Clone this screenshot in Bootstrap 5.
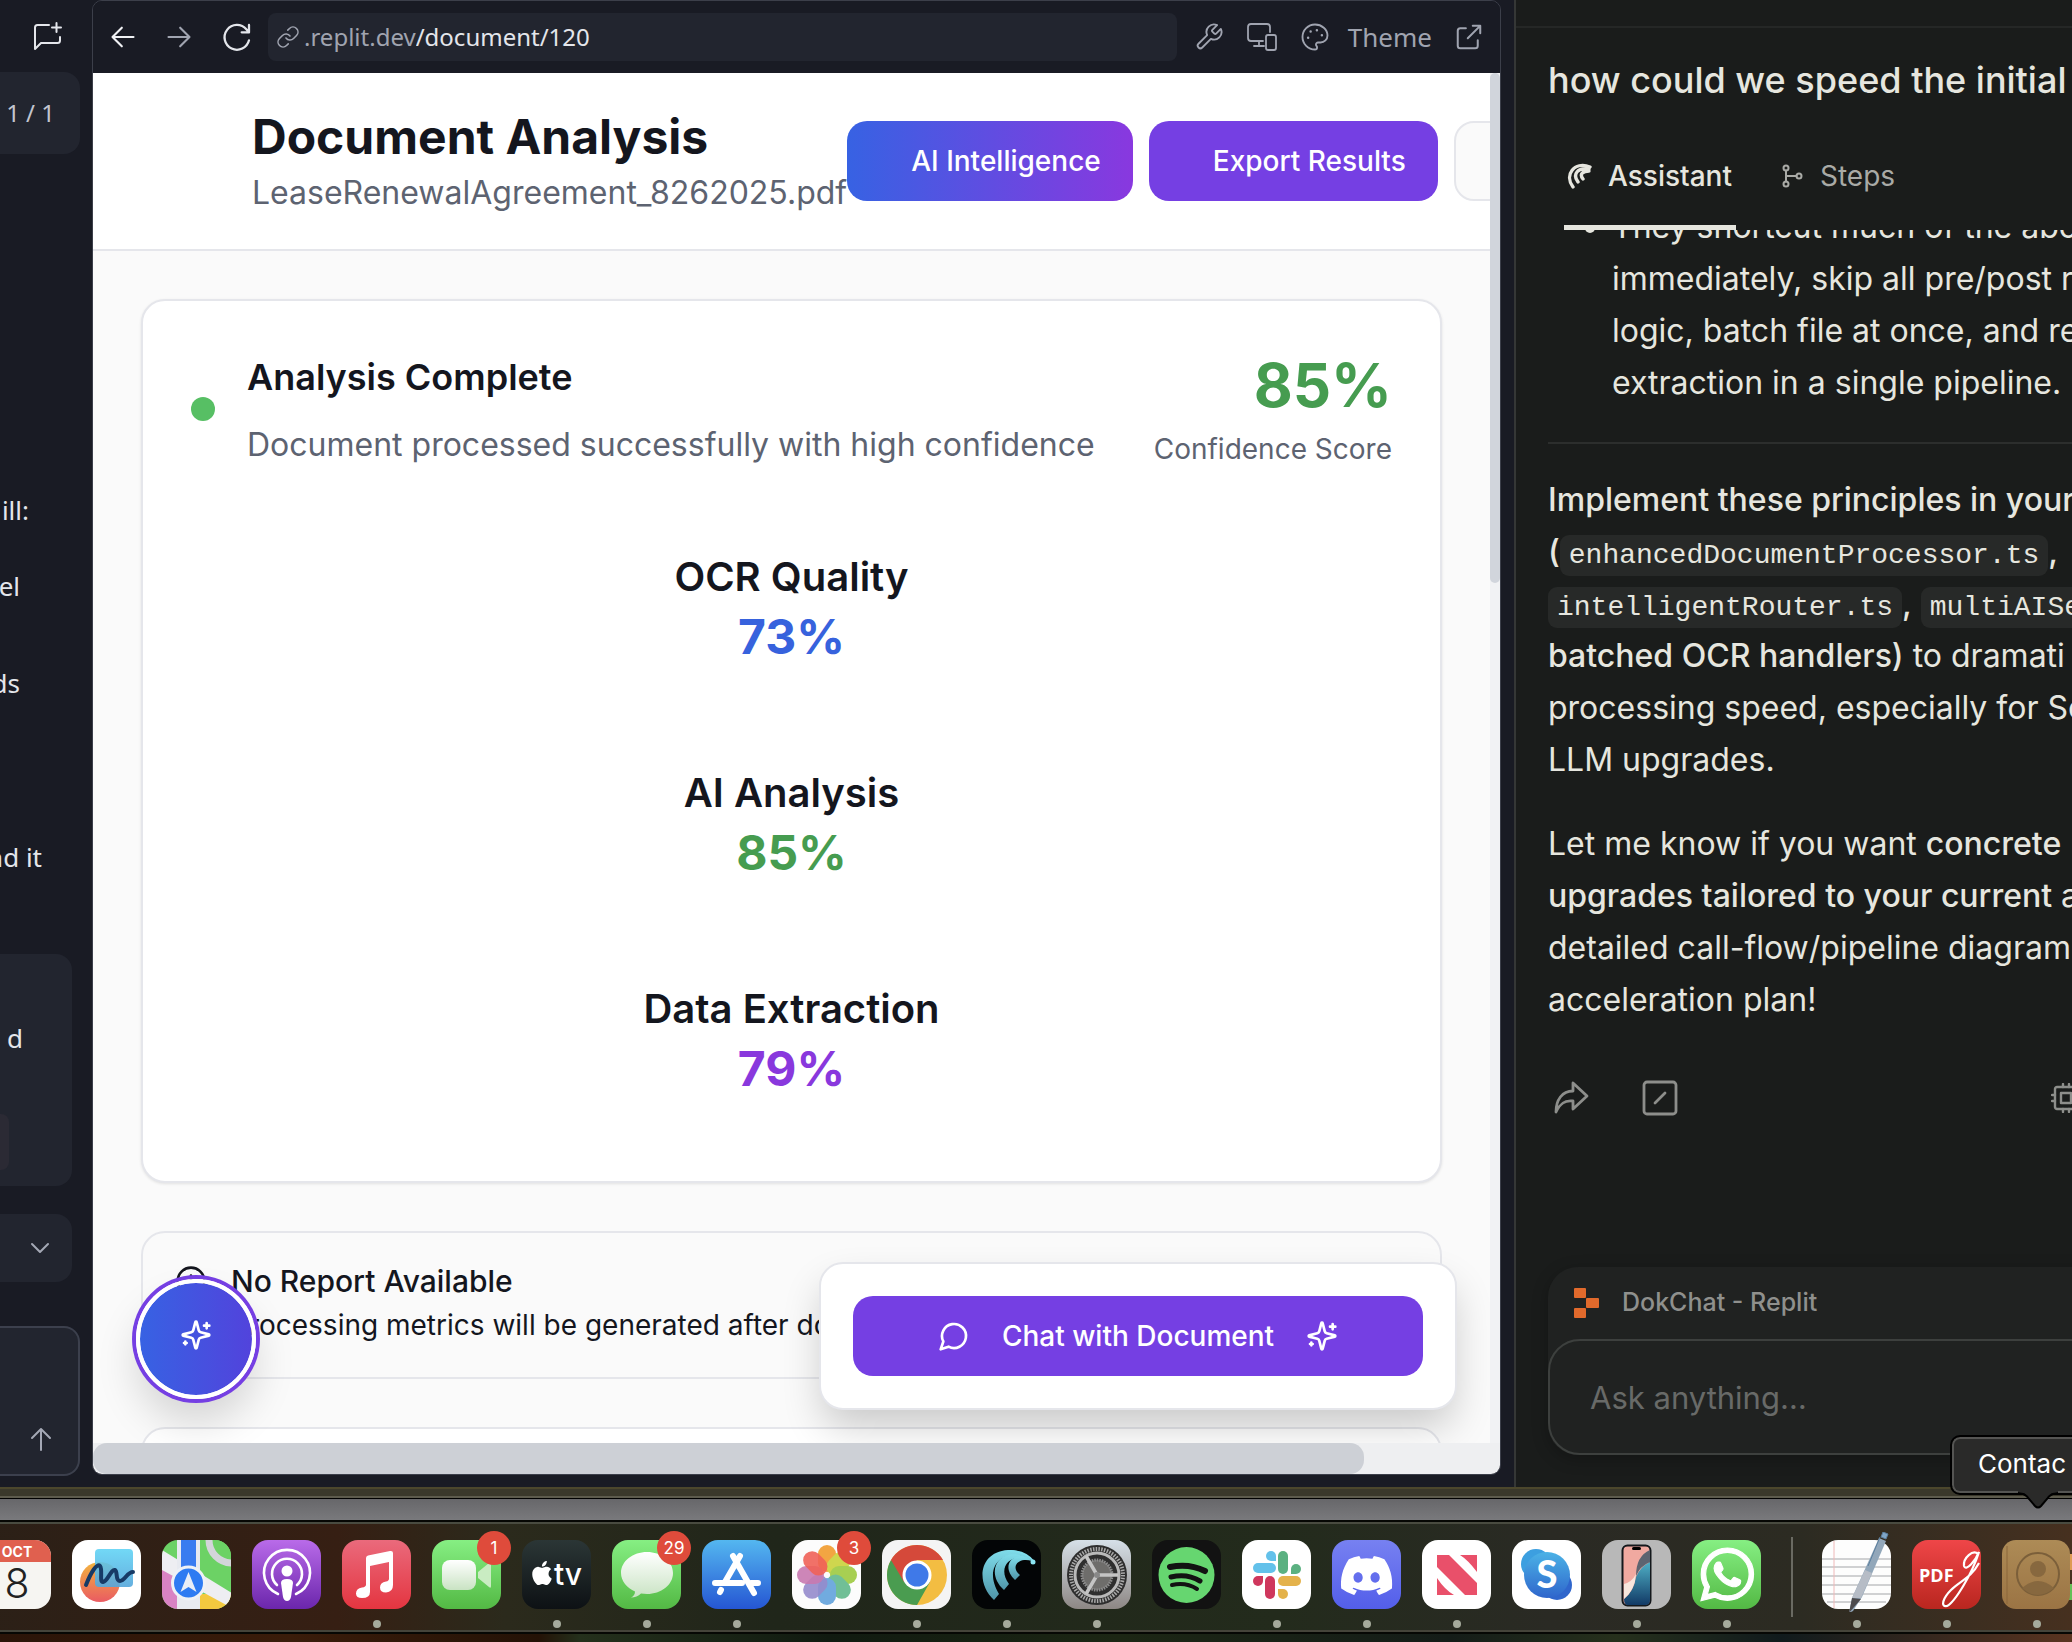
<!DOCTYPE html>
<html lang="en">
<head>
<meta charset="utf-8">
<meta name="viewport" content="width=device-width, initial-scale=1">
<title>Document Analysis</title>
<link href="https://cdn.jsdelivr.net/npm/bootstrap@5.3.0/dist/css/bootstrap.min.css" rel="stylesheet">
<script src="https://cdn.jsdelivr.net/npm/bootstrap@5.3.0/dist/js/bootstrap.bundle.min.js"></script>
<style>
body{height:100vh;overflow:hidden;background:#191b24;font-family:Inter,"Liberation Sans",sans-serif;white-space:nowrap}
svg{display:block;flex:none}
.ln{fill:none;stroke:currentColor;stroke-linecap:round;stroke-linejoin:round}
button{border:0;background:none;padding:0;color:inherit}
.ide{font-family:"Noto Sans",sans-serif;color:#e4e6eb;background:#191b24}
/* agent sidebar */
.agent{width:92px;flex:none;font-size:26px;line-height:36px}
.agent-head{height:72px;padding-right:29px}
.panelbox{background:#22252f;border-radius:0 16px 16px 0}
.counter{height:82px;margin-right:12px;padding-right:25px;font-size:24px;color:#c2c5cf}
.endline{display:flex;justify-content:flex-end}
.taskbox{height:232px;margin-right:20px}
.taskchip{width:9px;height:56px;background:#2b2a34;border-radius:0 8px 8px 0}
.foldbox{height:68px;margin-right:20px;padding-right:20px;color:#a4a8b5}
.prompt{height:150px;margin-right:12px;padding:0 24px 22px 0;border:2px solid #3c404d;border-left:0;color:#a4a8b5}
/* web view */
.webview{min-width:0;margin:0 13px 12px 0;border:1px solid #3c3f4a;border-radius:10px;overflow:hidden}
.toolbar{height:72px;flex:none;padding:0 16px 0 16px;color:#a0a4b0}
.address{height:48px;min-width:0;background:#22252f;border-radius:8px;padding:0 8px;font-size:24px;margin-left:15px;margin-right:17px}
.address input{background:none;border:0;outline:0;color:#e4e6eb;padding:0;min-width:0;flex:1}
.themebtn{font-size:26px}
.site{background:#fafafa;min-height:0;color:#14161e}
.site-head{height:178px;flex:none;background:#fff;border-bottom:2px solid #e5e6eb;padding-left:159px}
.site-head h1{font-size:48px;line-height:64px;font-weight:700;margin:0}
.sub{font-size:32px;line-height:48px;color:#5d6371}
.act{height:80px;border-radius:20px;color:#fff;font-size:28px;font-weight:500;padding:0 32px 0 64px}
.grad{background:linear-gradient(90deg,#3762e3,#8938df)}
.violet{background:#753fe3}
.more{width:190px;background:#fafafa;border:2px solid #e5e6eb}
.site-body{padding:48px 48px 0}
.panel{background:#fff;border:2px solid #e5e6eb;border-radius:24px}
.summary{padding:48px;box-shadow:0 1px 3px #0000001a}
.dot{width:24px;height:24px;border-radius:50%;background:#57bf64;flex:none}
.summary h2{font-size:36px;line-height:56px;font-weight:600;margin:0 0 16px}
.score{font-size:60px;line-height:72px;font-weight:700;color:#469c50}
.cap{font-size:28px;line-height:40px;color:#5d6371}
.metric{padding:32px 0;text-align:center}
.metric h3{font-size:40px;line-height:56px;font-weight:600;margin:0}
.metric div{font-size:48px;line-height:64px;font-weight:700}
.notice{background:#fafafa;padding:32px;margin-top:48px;height:148px;overflow:hidden}
.notice h4{font-size:30px;line-height:32px;font-weight:500;margin:0 0 8px}
.notice p{font-size:28px;line-height:40px;margin:0}
.vbar{width:10px;background:#f1f2f4}
.vbar div{height:510px;background:#d1d5dc;border-radius:5px}
.hbar{height:31px;flex:none;background:#eeeff1;padding-right:10px}
.hbar div{width:91%;height:31px;background:#cdd0d6;border-radius:14px}
.fab{position:absolute;left:43px;bottom:44px;width:120px;height:120px;border-radius:50%;border:4px solid #fff;background:linear-gradient(90deg,#3762e3,#5243dc);background-clip:padding-box;box-shadow:0 0 0 4px #753fe3,0 24px 40px #00000026;color:#fff}
.chatpop{position:absolute;right:33px;bottom:33px;width:638px;padding:32px;box-shadow:0 20px 40px -4px #00000033}
.chatpop button{font-size:28px;padding:0}
/* assistant panel */
.assist{width:558px;flex:none;background:#1a1c1b;border-left:2px solid #353736;color:#e6e6df;overflow:hidden}
.assist-top{height:28px;border-bottom:2px solid #252726;flex:none}
.ask-title{font-size:36px;line-height:48px;font-weight:500;margin:0;padding:28px 0 0 32px}
.tabrow{padding-left:48px;margin-top:18px;gap:44px}
.tabrow a{height:108px;font-size:28px;color:#a9aaa6;text-decoration:none;padding:0 4px 0 2px}
.tabrow a.active{font-weight:500;color:#e6e6df;box-shadow:inset 0 -5px #e6e6df}
.thread{min-height:0;overflow:hidden;padding-left:32px;font-size:32px;line-height:52px}
.thread ul{margin:-29px 0 0;padding-left:64px}
.thread p{margin:0 0 32px}
.thread b{font-weight:500}
.thread hr{margin:33px 0 30px;border:0;height:2px;background:#2c2e2d;opacity:1}
.thread code{font-family:"Liberation Mono",monospace;font-size:28px;line-height:28px;color:#e6e6df;background:#272928;border-radius:9px;padding:5px 9px}
.acts{gap:53px;margin-top:54px;padding-left:5px;color:#8d8e8b}
.composer{margin:0 0 32px 32px;width:640px;background:#202221;border-radius:30px;color:#8f908d;box-shadow:0 4px 16px #00000040}
.source{height:72px;padding-left:26px;font-size:25px;font-weight:500;gap:23px}
.composer input{height:116px;width:640px;background:#202221;border:2px solid #3d403e;border-radius:32px;padding:0 40px;font-size:31px;color:#e6e6df}
.composer input::placeholder{color:#686a68;opacity:1}
/* desktop */
.rim{height:11px;background:#3a382b;border-top:2px solid #4c472c;border-bottom:2px solid #5d5b4d}
.shelf{height:24px;background:linear-gradient(#67676a,#7b7b7e);border-top:1px solid #000}
.dock{position:relative;height:110px;border-top:2px solid #494b40;border-bottom:2px solid #45443a;outline:2px solid #060704;padding:16px 0 0;margin-left:-18px;gap:20px;background:linear-gradient(90deg,#2b2017,#361f13 17%,#2b2a1c 25%,#20261a 38%,#232b1c 62%,#2a2a24 75%,#2c2b22 87%,#46301f)}
.app{position:relative;width:70px;height:90px;flex:none}
.app.open::after{content:"";position:absolute;left:31px;top:80px;width:8px;height:8px;border-radius:50%;background:#a5aa9c}
.app .count{position:absolute;right:-9px;top:-9px;width:34px;height:34px;border-radius:50%;background:#df4b3b;color:#fff;font-size:17px;line-height:34px;text-align:center}
.rule{width:2px;height:80px;margin:-3px 9px 0;background:#6a6a62;flex:none}
.paper{height:10px;background:linear-gradient(90deg,#2a1408,#3a1c0a 14%,#241206 26%,#24301c 28%,#101a10 40%,#1c2614 54%,#141c18 70%,#26301c 78%,#101a1c 86%,#5a3420)}
.tip{position:absolute;right:0;bottom:149px;width:120px;height:56px;z-index:5;background:#2a2a29;border:2px solid #555553;border-right:0;outline:2px solid #000;border-radius:8px 0 0 8px;padding-left:24px;font-size:26px;line-height:50px;color:#fff}
.tip svg{position:absolute;left:64px;top:50px}
</style>
</head>
<body class="d-flex flex-column position-relative">
<svg width="0" height="0" class="position-absolute" aria-hidden="true">
 <defs>
  <symbol id="spark" viewBox="0 0 24 24"><path d="M9.937 15.5A2 2 0 0 0 8.5 14.063l-6.135-1.582a.5.5 0 0 1 0-.962L8.5 9.936A2 2 0 0 0 9.937 8.5l1.582-6.135a.5.5 0 0 1 .963 0L14.063 8.5A2 2 0 0 0 15.5 9.937l6.135 1.581a.5.5 0 0 1 0 .964L15.5 14.063a2 2 0 0 0-1.437 1.437l-1.582 6.135a.5.5 0 0 1-.963 0zM20 3v4M22 5h-4M4 17v2M5 18H3"/></symbol>
  <linearGradient id="gGreen" x2="0" y2="1"><stop stop-color="#86ef83"/><stop offset="1" stop-color="#53b944"/></linearGradient>
  <linearGradient id="gWhite" x2="0" y2="1"><stop stop-color="#fff"/><stop offset="1" stop-color="#c9e3c3"/></linearGradient>
  <linearGradient id="gPod" x2="0" y2="1"><stop stop-color="#b96be9"/><stop offset="1" stop-color="#6b26ac"/></linearGradient>
  <linearGradient id="gMusic" x2="0" y2="1"><stop stop-color="#ea6a7c"/><stop offset="1" stop-color="#e43540"/></linearGradient>
  <linearGradient id="gStore" x2="0" y2="1"><stop stop-color="#54b7f0"/><stop offset="1" stop-color="#2556d3"/></linearGradient>
  <linearGradient id="gTv" x2="0" y2="1"><stop stop-color="#2b3636"/><stop offset="1" stop-color="#0d1114"/></linearGradient>
  <linearGradient id="gDisc" x2="0" y2="1"><stop stop-color="#7781f1"/><stop offset="1" stop-color="#535eea"/></linearGradient>
  <linearGradient id="gSet" x2="0" y2="1"><stop stop-color="#d6e0e8"/><stop offset="1" stop-color="#8d8784"/></linearGradient>
  <linearGradient id="gPdf" x2="0" y2="1"><stop stop-color="#ef4648"/><stop offset="1" stop-color="#b9261f"/></linearGradient>
  <linearGradient id="gBook" x2="0" y2="1"><stop stop-color="#ad8b56"/><stop offset="1" stop-color="#9b7444"/></linearGradient>
  <linearGradient id="gSky" x2="0" y2="1"><stop stop-color="#4bb2e6"/><stop offset="1" stop-color="#2f66cc"/></linearGradient>
  <linearGradient id="gFree" x2="0" y2="1"><stop stop-color="#f3b43f"/><stop offset="1" stop-color="#ea5b62"/></linearGradient>
  <linearGradient id="gSq" x2="0" y2="1"><stop stop-color="#62d4f5"/><stop offset="1" stop-color="#54a6db"/></linearGradient>
  <linearGradient id="gWave" x2="0" y2="1"><stop stop-color="#7fdcea"/><stop offset="1" stop-color="#4f95a8"/></linearGradient>
  <linearGradient id="gPh" x2="0" y2="1"><stop stop-color="#4fb0c6"/><stop offset="1" stop-color="#123a66"/></linearGradient>
  <clipPath id="sq"><rect width="69" height="69" rx="16"/></clipPath>
 </defs>
</svg>

<main class="d-flex flex-grow-1" style="min-height:0">
 <aside class="ide agent d-flex flex-column overflow-hidden">
  <div class="agent-head d-flex align-items-center justify-content-end">
   <button aria-label="New chat"><svg class="ln" width="30" height="30" viewBox="0 0 30 30" stroke-width="2"><path d="M16 4H4.500Q2 4 2 6.500V28l6-6h16.500Q27 22 27 19.500V16M23.500 2v9M19 6.500h9"/></svg></button>
  </div>
  <div class="panelbox counter d-flex align-items-center justify-content-end">1 / 1</div>
  <div class="endline" style="margin:338px 63px 0 0">ill:</div>
  <div class="endline" style="margin:40px 72px 0 0">el</div>
  <div class="endline" style="margin:61px 72px 0 0">ds</div>
  <div class="endline" style="margin:138px 50px 0 0">nd it</div>
  <div class="panelbox taskbox d-flex flex-column justify-content-end" style="margin-top:79px">
   <div class="endline mb-auto" style="margin:66px 49px 0 0">d</div>
   <div class="taskchip mb-3"></div>
  </div>
  <button class="panelbox foldbox d-flex align-items-center justify-content-end" style="margin-top:28px" aria-label="Expand"><svg class="ln" width="24" height="24" viewBox="0 0 24 24" stroke-width="2"><path d="M4 8l8 8 8-8"/></svg></button>
  <div class="panelbox prompt d-flex align-items-end justify-content-end" style="margin-top:44px"><button aria-label="Send"><svg class="ln" width="26" height="26" viewBox="0 0 26 26" stroke-width="2"><path d="M13 24V3M4 12l9-9 9 9"/></svg></button></div>
 </aside>

 <section class="webview flex-grow-1 d-flex flex-column">
  <div class="ide toolbar d-flex align-items-center">
   <div class="d-flex align-items-center" style="gap:28px">
    <button aria-label="Back" style="color:#f0f1f4"><svg class="ln" width="28" height="28" viewBox="0 0 24 24" stroke-width="1.800"><path d="M21 12H4M11 4l-8 8 8 8"/></svg></button>
    <button aria-label="Forward"><svg class="ln" width="28" height="28" viewBox="0 0 24 24" stroke-width="1.800"><path d="M3 12h17M13 4l8 8-8 8"/></svg></button>
    <button aria-label="Reload" style="color:#e4e6eb"><svg class="ln" width="32" height="32" viewBox="0 0 24 24" stroke-width="1.700"><path d="M21 14.500A9.300 9.300 0 1 1 19 6.200l2 2.300M21 3v5.500h-5.500"/></svg></button>
   </div>
   <div class="address d-flex align-items-center flex-grow-1">
    <svg class="ln me-1" width="24" height="24" viewBox="0 0 24 24" stroke-width="1.600"><path d="M10 13a5 5 0 0 0 7.540.54l3-3a5 5 0 0 0-7.070-7.070l-1.720 1.710M14 11a5 5 0 0 0-7.540-.54l-3 3a5 5 0 0 0 7.070 7.070l1.710-1.710"/></svg>
    <label for="path">.replit.dev</label><input id="path" value="/document/120">
   </div>
   <div class="d-flex align-items-center" style="gap:22px">
    <button aria-label="Tools"><svg class="ln" width="30" height="30" viewBox="0 0 24 24" stroke-width="1.500"><path d="M14.700 6.300a1 1 0 0 0 0 1.400l1.600 1.600a1 1 0 0 0 1.400 0l3.770-3.770a6 6 0 0 1-7.940 7.940l-6.910 6.910a2.120 2.120 0 0 1-3-3l6.910-6.910a6 6 0 0 1 7.940-7.940l-3.760 3.760z"/></svg></button>
    <button aria-label="Device size"><svg class="ln" width="32" height="30" viewBox="0 0 32 30" stroke-width="1.800"><path d="M17 19H5Q2 19 2 16V5Q2 2 5 2h16Q24 2 24 5v5M13 19v5M8 24h10"/><rect x="20" y="13" width="10" height="15" rx="2"/></svg></button>
    <button class="themebtn d-flex align-items-center" style="gap:18px"><svg class="ln" width="30" height="30" viewBox="0 0 24 24" stroke-width="1.500"><path d="M12 2C6.500 2 2 6.500 2 12s4.500 10 10 10c.926 0 1.648-.746 1.648-1.688 0-.437-.18-.835-.437-1.125-.29-.289-.438-.652-.438-1.125a1.640 1.640 0 0 1 1.668-1.668h1.996c3.051 0 5.555-2.503 5.555-5.554C21.965 6.012 17.461 2 12 2z"/><path stroke-width="2" d="M13.500 6.500h.01M17.500 10.500h.01M8.500 7.500h.01M6.500 12.500h.01"/></svg>Theme</button>
    <button aria-label="Open in new tab"><svg class="ln" width="30" height="30" viewBox="0 0 24 24" stroke-width="1.600"><path d="M9.500 5H5Q3 5 3 7v12q0 2 2 2h12q2 0 2-2v-4.500M15 3h6v6M20.500 3.500L11 13"/></svg></button>
   </div>
  </div>
  <div class="site d-flex flex-grow-1">
   <div class="position-relative flex-grow-1 overflow-hidden d-flex flex-column" style="min-width:0">
    <header class="site-head d-flex align-items-center">
     <div class="flex-shrink-0"><h1>Document Analysis</h1><div class="sub">LeaseRenewalAgreement_8262025.pdf</div></div>
     <div class="d-flex gap-3 flex-shrink-0">
      <button class="act grad">AI Intelligence</button>
      <button class="act violet">Export Results</button>
      <button class="act more" aria-label="More"></button>
     </div>
    </header>
    <div class="site-body">
     <article class="panel summary">
      <div class="d-flex align-items-center mb-5">
       <span class="dot"></span>
       <div class="ms-4 ps-2"><h2>Analysis Complete</h2><div class="sub">Document processed successfully with high confidence</div></div>
       <div class="ms-auto text-end"><div class="score mb-2">85%</div><div class="cap">Confidence Score</div></div>
      </div>
      <div class="d-flex flex-column" style="gap:32px">
       <div class="metric"><h3>OCR Quality</h3><div style="color:#3762dd">73%</div></div>
       <div class="metric"><h3>AI Analysis</h3><div style="color:#469c50">85%</div></div>
       <div class="metric"><h3>Data Extraction</h3><div style="color:#8938dd">79%</div></div>
      </div>
     </article>
     <article class="panel notice d-flex">
      <svg class="ln" width="32" height="32" viewBox="0 0 24 24" stroke-width="2"><circle cx="12" cy="12" r="10"/><path d="M12 8v4M12 16h.01"/></svg>
      <div class="ms-4"><h4>No Report Available</h4><p>Processing metrics will be generated after document</p></div>
     </article>
     <article class="panel mt-5" style="height:80px"></article>
    </div>
    <button class="fab d-flex align-items-center justify-content-center pb-2" aria-label="Assistant"><svg class="ln" width="32" height="32" stroke-width="2"><use href="#spark"/></svg></button>
    <div class="panel chatpop"><button class="act violet w-100 d-flex align-items-center justify-content-center" style="gap:32px"><svg class="ln" width="32" height="32" viewBox="0 0 24 24" stroke-width="2"><path d="M7.900 20A9 9 0 1 0 4 16.100L2 22Z"/></svg>Chat with Document<svg class="ln" width="32" height="32" stroke-width="2"><use href="#spark"/></svg></button></div>
   </div>
   <div class="vbar flex-shrink-0"><div></div></div>
  </div>
  <div class="hbar"><div></div></div>
 </section>

 <aside class="assist d-flex flex-column">
  <div class="assist-top"></div>
  <h2 class="ask-title">how could we speed the initial</h2>
  <nav class="tabrow d-flex">
   <a href="#" class="active d-flex align-items-center" style="gap:16px"><svg class="ln" width="26" height="26" viewBox="0 0 26 26" stroke-width="3.400" stroke-linecap="butt"><path d="M7 24C-2 12 8-2 24 4M12 19C6 11 12 4 23 6M17 16C13 11 17 8 23 8"/></svg>Assistant</a>
   <a href="#" class="d-flex align-items-center" style="gap:16px"><svg class="ln" width="22" height="24" viewBox="0 0 22 24" stroke-width="2"><circle cx="4" cy="4" r="2.500"/><circle cx="4" cy="20" r="2.500"/><circle cx="17" cy="12" r="2.500"/><path d="M4 6.500v11M4 12h10.500"/></svg>Steps</a>
  </nav>
  <div class="thread flex-grow-1">
   <ul><li>They shortcut much of the abo<br>immediately, skip all pre/post r<br>logic, batch file at once, and re<br>extraction in a single pipeline.</li></ul>
   <hr>
   <p><b>Implement these principles in your</b><br><b>(</b><code>enhancedDocumentProcessor.ts</code><b>,</b><br><code>intelligentRouter.ts</code><b>,</b> <code>multiAISe</code><br><b>batched OCR handlers)</b> to dramati<br>processing speed, especially for Sc<br>LLM upgrades.</p>
   <p>Let me know if you want <b>concrete</b><br><b>upgrades tailored to your current</b> a<br>detailed call-flow/pipeline diagram,<br>acceleration plan!</p>
   <div class="acts d-flex align-items-center">
    <button aria-label="Share"><svg class="ln" width="36" height="36" viewBox="0 0 36 36" stroke-width="2.800"><path d="M20 3l14 13-14 13v-8C12 20 7 23 3 32 3 20 9 11 20 11z"/></svg></button>
    <button aria-label="Rewrite"><svg class="ln" width="36" height="36" viewBox="0 0 36 36" stroke-width="2.800"><rect x="2" y="2" width="32" height="32" rx="3"/><path d="M13 23L23 13"/></svg></button>
    <button aria-label="Model" class="ms-auto" style="margin-right:-9px"><svg class="ln" width="30" height="30" viewBox="0 0 30 30" stroke-width="2.400"><rect x="4" y="4" width="22" height="22" rx="2"/><rect x="10" y="10" width="10" height="10"/><path d="M12 1v3M18 1v3M12 26v3M18 26v3M1 12h3M1 18h3M26 12h3M26 18h3"/></svg></button>
   </div>
  </div>
  <div class="composer">
   <label class="source d-flex align-items-center" for="ask"><svg width="25" height="30" viewBox="0 0 25 30" fill="#e16a2c"><rect width="12" height="10" rx="1"/><rect x="12" y="10" width="13" height="10" rx="1"/><rect y="20" width="12" height="10" rx="1"/></svg>DokChat - Replit</label>
   <input id="ask" placeholder="Ask anything…">
  </div>
 </aside>
</main>

<div class="rim flex-shrink-0"></div>
<div class="shelf flex-shrink-0"></div>
<nav class="dock d-flex flex-shrink-0">
 <div class="app"><svg width="70" height="70"><g clip-path="url(#sq)"><rect width="70" height="70" fill="#f6f5f2"/><rect width="70" height="22" fill="#e0604f"/></g><text x="35" y="17" text-anchor="middle" font-size="14" font-weight="700" fill="#fff">OCT</text><text x="35" y="58" text-anchor="middle" font-size="41" font-weight="300" fill="#222">8</text></svg></div>
 <div class="app"><svg width="70" height="70"><rect width="69" height="69" rx="16" fill="#fff"/><circle cx="28" cy="42" r="20" fill="url(#gFree)"/><rect x="23" y="9" width="38" height="38" rx="4" fill="url(#gSq)" opacity=".9"/><path d="M14 45C19 32 25 23 28 26 31 30 27 42 31 42 36 41 39 29 43 30 46 32 43 41 48 41 53 41 55 32 61 32" fill="none" stroke="#173a66" stroke-width="4" stroke-linecap="round"/></svg></div>
 <div class="app"><svg width="70" height="70"><g clip-path="url(#sq)"><rect width="70" height="70" fill="#6cd265"/><path d="M0 28L70 78H0z" fill="#d983c4"/><path d="M36 54h34v18H36z" fill="#f3c93f"/><path d="M0 10L70 53V68L0 30z" fill="#eeeef2"/><rect x="15" width="23" height="70" fill="#e8eaf0"/><rect x="19" width="15" height="48" fill="#3a7cf0"/><circle cx="70" cy="0" r="23" fill="#6cd265" stroke="#d3d5da" stroke-width="7"/></g><circle cx="26.500" cy="43" r="16" fill="#2e7bf2" stroke="#eef1f6" stroke-width="3"/><path d="M26.500 32l8 20-8-5-8 5z" fill="#e9eef6"/></svg></div>
 <div class="app"><svg width="70" height="70"><rect width="69" height="69" rx="16" fill="url(#gPod)"/><g fill="none" stroke="#fff" stroke-width="2.600" stroke-linecap="round"><path d="M26 54a23 23 0 1 1 18 0M25 45a15 15 0 1 1 20 0"/></g><circle cx="35" cy="31" r="5.500" fill="#fff"/><path d="M29 43q0-4 6-4t6 4l-2 14q-1 4-4 4t-4-4z" fill="#fff"/></svg></div>
 <div class="app open"><svg width="70" height="70"><rect width="69" height="69" rx="16" fill="url(#gMusic)"/><path d="M24 18q0-2 2-2.500l22-4.500q3-.5 3 2V45q0 7-7 7.500-6 0-6-5 0-5 6-6 3-.5 3-3V22L28 26v26q0 6-8 6-6 0-6-4.500 0-5 6-6 4-.5 4-3z" fill="#fff"/></svg></div>
 <div class="app"><svg width="70" height="70"><rect width="69" height="69" rx="16" fill="url(#gGreen)"/><rect x="10" y="20" width="34" height="30" rx="8" fill="url(#gWhite)"/><path d="M46 32l11-9q2-1 2 2v21q0 3-2 1l-11-9z" fill="#c9ecc2"/></svg><span class="count">1</span></div>
 <div class="app open"><svg width="70" height="70"><rect width="69" height="69" rx="16" fill="url(#gTv)"/><path transform="translate(8 21) scale(1.500)" fill="#fff" d="M11.182.008C11.148-.03 9.923.023 8.857 1.180c-1.066 1.156-.902 2.482-.878 2.516s1.520.087 2.475-1.258.762-2.391.728-2.430m3.314 11.733c-.048-.096-2.325-1.234-2.113-3.422s1.675-2.789 1.698-2.854-.597-.79-1.254-1.157a3.700 3.700 0 0 0-1.563-.434c-.108-.003-.483-.095-1.254.116-.508.139-1.653.589-1.968.607-.316.018-1.256-.522-2.267-.665-.647-.125-1.333.131-1.824.328-.49.196-1.422.754-2.074 2.237-.652 1.482-.311 3.830-.067 4.560s.625 1.924 1.273 2.796c.576.984 1.340 1.667 1.659 1.899s1.219.386 1.843.067c.502-.308 1.408-.485 1.766-.472.357.013 1.061.154 1.782.539.571.197 1.111.115 1.652-.105.541-.221 1.324-1.059 2.238-2.758q.52-1.185.473-1.282"/><text x="32" y="45" font-size="30" font-weight="500" fill="#fff">tv</text></svg></div>
 <div class="app open"><svg width="70" height="70"><rect width="69" height="69" rx="16" fill="url(#gGreen)"/><path d="M35 12c14 0 26 9 26 21S49 54 35 54l-6-.5q-4 4-10 4 4-2 4-6C15 48 9 41 9 33 9 21 21 12 35 12z" fill="url(#gWhite)"/></svg><span class="count">29</span></div>
 <div class="app open"><svg width="70" height="70"><rect width="69" height="69" rx="16" fill="url(#gStore)"/><g stroke="#fff" stroke-width="6" stroke-linecap="round"><path d="M38 16L23 42M31 16l21 37M13 43h27M49 43h7M19 50l-1 2"/></g></svg></div>
 <div class="app"><svg width="70" height="70"><rect width="69" height="69" rx="16" fill="#fcfcfc"/><g transform="translate(35 35)" opacity=".9"><rect x="-9" y="-30" width="18" height="27" rx="9" fill="#f29c2e"/><rect x="-9" y="-30" width="18" height="27" rx="9" fill="#cbd23c" transform="rotate(45)"/><rect x="-9" y="-30" width="18" height="27" rx="9" fill="#9ecb40" transform="rotate(90)"/><rect x="-9" y="-30" width="18" height="27" rx="9" fill="#63b98b" transform="rotate(135)"/><rect x="-9" y="-30" width="18" height="27" rx="9" fill="#62a3dc" transform="rotate(180)"/><rect x="-9" y="-30" width="18" height="27" rx="9" fill="#8b7fc8" transform="rotate(225)" opacity=".9"/><rect x="-9" y="-30" width="18" height="27" rx="9" fill="#c26ba8" transform="rotate(270)" opacity=".9"/><rect x="-9" y="-30" width="18" height="27" rx="9" fill="#ee5147" transform="rotate(315)" opacity=".9"/></g></svg><span class="count">3</span></div>
 <div class="app open"><svg width="70" height="70"><rect width="69" height="69" rx="16" fill="#f4f4f4"/><circle cx="35" cy="35" r="30" fill="#f3bd42"/><path d="M35 35L9 20A30 30 0 0 0 35 65L48 42z" fill="#4a9c50"/><path d="M35 20H61A30 30 0 0 0 9 20L22 42z" fill="#d5493a"/><circle cx="35" cy="35" r="14.500" fill="#fff"/><circle cx="35" cy="35" r="11.500" fill="#3f79e8"/></svg></div>
 <div class="app open"><svg width="70" height="70"><rect width="69" height="69" rx="16" fill="#030506"/><g fill="url(#gWave)"><path d="M22 60C4 44 6 12 36 10c10 0 18 3 23 10C38 6 8 22 27 54z"/><path d="M32 50C14 34 24 10 48 15c6 1 10 3 11 5C40 12 24 26 37 44z"/><path d="M43 40C30 28 38 14 52 17c4 1 7 2 8 4-14-4-22 6-12 14z"/></g><path d="M38 11q16 0 24 11" fill="none" stroke="#7fdcea" stroke-width="2"/><circle cx="61" cy="22" r="2.500" fill="#8be4f2"/></svg></div>
 <div class="app open"><svg width="70" height="70"><rect width="69" height="69" rx="16" fill="url(#gSet)"/><circle cx="35" cy="35" r="30" fill="#2e2e2e"/><circle cx="35" cy="35" r="26" fill="none" stroke="#a9a9a9" stroke-width="4" stroke-dasharray="1.500 1.300"/><circle cx="35" cy="35" r="22" fill="none" stroke="#b9b9b9" stroke-width="3"/><circle cx="35" cy="35" r="15" fill="#6e6d6b" stroke="#8d8d8d" stroke-width="3" stroke-dasharray="1.500 1"/><path d="M35 35h21M35 35L24 16M35 35L24 54" stroke="#c4c4c4" stroke-width="3.500"/><circle cx="35" cy="35" r="3" fill="#888"/></svg></div>
 <div class="app"><svg width="70" height="70"><rect width="69" height="69" rx="16" fill="#121212"/><circle cx="34.500" cy="35" r="28" fill="#66d670"/><g fill="none" stroke="#121212" stroke-linecap="round"><path stroke-width="6" d="M18 27q19-4 35 4"/><path stroke-width="5" d="M19 37q16-4 29 4"/><path stroke-width="4" d="M20 45q14-3 25 4"/></g></svg></div>
 <div class="app open"><svg width="70" height="70"><rect width="69" height="69" rx="16" fill="#fff"/><g fill="#63c1ea"><rect x="11" y="23" width="23" height="10" rx="5"/><path d="M34 21h-5a5 5 0 1 1 5-5z"/></g><g fill="#5bb181"><rect x="36" y="11" width="10" height="23" rx="5"/><path d="M49 34v-5a5 5 0 1 1 5 5z"/></g><g fill="#e4b24b"><rect x="36" y="36" width="23" height="10" rx="5"/><path d="M36 49h5a5 5 0 1 1-5 5z"/></g><g fill="#cf375d"><rect x="23" y="36" width="10" height="23" rx="5"/><path d="M21 36v5a5 5 0 1 1-5-5z"/></g></svg></div>
 <div class="app open"><svg width="70" height="70"><rect width="69" height="69" rx="16" fill="url(#gDisc)"/><path transform="translate(9 10) scale(3.200)" fill="#fff" d="M13.545 2.907a13.200 13.200 0 0 0-3.257-1.011.05.05 0 0 0-.052.025c-.141.25-.297.577-.406.833a12.200 12.200 0 0 0-3.658 0 8 8 0 0 0-.412-.833.05.05 0 0 0-.052-.025c-1.125.194-2.220.534-3.257 1.011a.04.04 0 0 0-.021.018C.356 6.024-.213 9.047.066 12.032q.003.022.021.037a13.300 13.300 0 0 0 3.995 2.020.05.05 0 0 0 .056-.019q.463-.63.818-1.329a.05.05 0 0 0-.01-.059l-.018-.011a9 9 0 0 1-1.248-.595.05.05 0 0 1-.02-.066l.015-.019q.127-.095.248-.195a.05.05 0 0 1 .051-.007c2.619 1.196 5.454 1.196 8.041 0a.05.05 0 0 1 .053.007q.121.1.248.195a.05.05 0 0 1-.004.085 8 8 0 0 1-1.249.594.05.05 0 0 0-.03.03.05.05 0 0 0 .003.041c.24.465.515.909.817 1.329a.05.05 0 0 0 .056.019 13.200 13.200 0 0 0 4.001-2.020.05.05 0 0 0 .021-.037c.334-3.451-.559-6.449-2.366-9.106a.03.03 0 0 0-.02-.019m-8.198 7.307c-.789 0-1.438-.724-1.438-1.612s.637-1.613 1.438-1.613c.807 0 1.450.73 1.438 1.613 0 .888-.637 1.612-1.438 1.612m5.316 0c-.788 0-1.438-.724-1.438-1.612s.637-1.613 1.438-1.613c.807 0 1.451.73 1.438 1.613 0 .888-.631 1.612-1.438 1.612"/></svg></div>
 <div class="app open"><svg width="70" height="70"><rect width="69" height="69" rx="16" fill="#fff"/><g fill="#e9506a"><path d="M15 15h12l28 28v12H43L15 27z"/><path d="M38 15h17v17q-9-12-17-17zM15 38q8 12 17 17H15z"/></g></svg></div>
 <div class="app"><svg width="70" height="70"><rect width="69" height="69" rx="16" fill="#fff"/><circle cx="24" cy="24" r="15" fill="#3c9fe0"/><circle cx="45" cy="45" r="15" fill="#2f66cc"/><circle cx="35" cy="35" r="23" fill="url(#gSky)"/><text x="35" y="48" text-anchor="middle" font-family="Lato,sans-serif" font-size="38" font-weight="900" fill="#fff">S</text></svg></div>
 <div class="app open"><svg width="70" height="70"><rect width="69" height="69" rx="16" fill="#b8b8b8"/><rect x="20.500" y="5.500" width="28" height="60" rx="5" fill="#f0a9a0" stroke="#14181c" stroke-width="2"/><path d="M48 22v38q0 5-5 5H26q-4 0-4-6 10-8 12-22 4-10 14-15z" fill="url(#gPh)"/><path d="M48 10q-14 6-14 26 4-10 14-14z" fill="#5d6470"/><path d="M22 44q8-2 12-10-1 16-12 25z" fill="#f7e6dd"/><rect x="30" y="7" width="9" height="3" rx="1.500"/></svg></div>
 <div class="app open"><svg width="70" height="70"><rect width="69" height="69" rx="16" fill="url(#gGreen)"/><path transform="translate(9 8) scale(3.300)" fill="#fff" stroke="#fff" stroke-width=".35" d="M13.601 2.326A7.850 7.850 0 0 0 7.994 0C3.627 0 .068 3.558.064 7.926c0 1.399.366 2.760 1.057 3.965L0 16l4.204-1.102a7.900 7.900 0 0 0 3.790.965h.004c4.368 0 7.926-3.558 7.930-7.930A7.900 7.900 0 0 0 13.600 2.326zM7.994 14.521a6.600 6.600 0 0 1-3.356-.92l-.24-.144-2.494.654.666-2.433-.156-.251a6.560 6.560 0 0 1-1.007-3.505c0-3.626 2.957-6.584 6.591-6.584a6.560 6.560 0 0 1 4.660 1.931 6.560 6.560 0 0 1 1.928 4.660c-.004 3.639-2.961 6.592-6.592 6.592m3.615-4.934c-.197-.099-1.170-.578-1.353-.646-.182-.065-.315-.099-.445.099-.133.197-.513.646-.627.775-.114.133-.232.148-.43.05-.197-.1-.836-.308-1.592-.985-.59-.525-.985-1.175-1.103-1.372-.114-.198-.011-.304.088-.403.087-.088.197-.232.296-.346.1-.114.133-.198.198-.33.065-.134.034-.248-.015-.347-.05-.099-.445-1.076-.612-1.470-.16-.389-.323-.335-.445-.34-.114-.007-.247-.007-.38-.007a.73.73 0 0 0-.529.247c-.182.198-.691.677-.691 1.654s.71 1.916.81 2.049c.098.133 1.394 2.132 3.383 2.992.47.205.84.326 1.129.418.475.152.904.129 1.246.08.38-.058 1.171-.48 1.338-.943.164-.464.164-.86.114-.943-.049-.084-.182-.133-.38-.232"/></svg></div>
 <div class="rule"></div>
 <div class="app open"><svg width="74" height="80" viewBox="0 -8 74 80" style="margin-top:-8px"><rect width="69" height="69" rx="16" fill="#fdfdfd"/><path d="M0 19h69M0 27h69M0 36h69M0 45h69M0 54h69M5 62h59" stroke="#a3a5a8" stroke-width="1"/><path d="M12 1v67" stroke="#efb8b8"/><path d="M27 73l3-15L57-2l7 3-24 56-9 14z" fill="#92a7ba"/><path d="M30 58l13-28 7 3-11 25z" fill="#b6bcc6"/><path d="M27 73l3-15 9 1z" fill="#4c4a4c"/><path d="M46 26L58-3M61-8l5 2-2 5-5-2z" stroke="#5b7f9e" fill="#7fa5c6"/></svg></div>
 <div class="app open"><svg width="72" height="70"><rect width="69" height="69" rx="16" fill="url(#gPdf)"/><text x="7" y="42" font-size="18" font-weight="700" font-family="'Open Sans',sans-serif" fill="#fff">PDF</text><path d="M66 14c-5-5-15 4-14 12 2 6 12-6 15-14C60 34 43 62 35 66c-7 1-4-8 4-16 9-9 20-12 28-27" fill="none" stroke="#fff" stroke-width="2.200"/></svg></div>
 <div class="app open"><svg width="70" height="70"><rect x="4" y="14" width="66" height="16" fill="#dd9a52"/><rect x="4" y="44" width="66" height="16" fill="#63bf57"/><rect width="68" height="69" rx="14" fill="url(#gBook)"/><path d="M5 6v58" stroke="#8a673b"/><g fill="none" stroke="#7b5f3a" stroke-width="2"><circle cx="36" cy="34" r="21"/></g><circle cx="36" cy="29" r="8" fill="#87683f"/><path d="M20 48q16-14 32 0-16 14-32 0z" fill="#87683f"/></svg></div>
</nav>
<div class="paper flex-shrink-0"></div>
<div class="tip">Contac<svg width="40" height="20" viewBox="0 0 40 20"><path d="M0 3q7 0 11 6l6 8q3 3 6 0l6-8q4-6 11-6V0H0z" fill="#2a2a29"/><path d="M0 4q7 0 11 6l6 7q3 3 6 0l6-7q4-6 11-6" fill="none" stroke="#000" stroke-width="2"/></svg></div>
</body>
</html>
